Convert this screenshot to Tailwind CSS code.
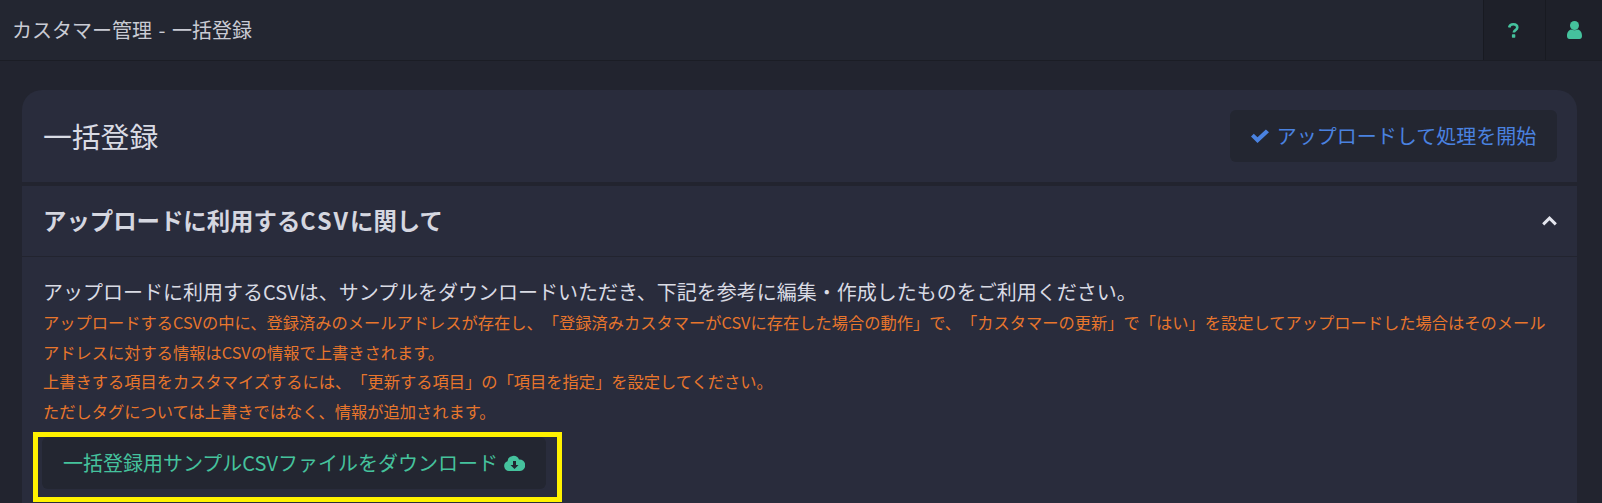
<!DOCTYPE html>
<html lang="ja">
<head>
<meta charset="utf-8">
<script src="https://cdn.jsdelivr.net/npm/@tailwindcss/browser@4"></script>
</head>
<body class="m-0 h-[503px] overflow-hidden bg-[#22242f] font-['Noto_Sans_CJK_JP','Noto_Sans',sans-serif] text-[#d5d7e0] [text-spacing-trim:space-all]">
  <header class="flex h-[61px] items-stretch justify-between border-b border-[#1b1d25] bg-[#232631]">
    <div class="flex items-center pl-[12px] text-[20px] text-[#c9cbd4] [word-spacing:2px]">カスタマー管理 - 一括登録</div>
    <div class="flex">
      <div class="flex w-[62px] items-center justify-center border-l border-[#181a21] bg-[#1e2029] pr-[2px]">
        <svg width="11" height="15" viewBox="0 0 11 15"><path d="M1.200 4.500C1.500 2.500 3 1.300 5.300 1.300c2.400 0 4 1.300 4 3.200 0 2.600-3.500 2.700-3.500 5" fill="none" stroke="#45c29d" stroke-width="2.600"/><rect x="3.900" y="11.300" width="3.400" height="3.400" rx=".6" fill="#45c29d"/></svg>
      </div>
      <div class="flex w-[57px] items-center justify-center border-l border-[#181a21] bg-[#1e2029]">
        <svg width="15" height="18" viewBox="0 0 15 18"><circle cx="7.500" cy="4.500" r="4.500" fill="#45c29d"/><path d="M0 15c0-4 2-6 4-6.500 2 1 5 1 7 0 2 .5 4 2.500 4 6.500 0 2-1 3-2.500 3h-10C1 18 0 17 0 15z" fill="#45c29d"/></svg>
      </div>
    </div>
  </header>
  <main class="relative pl-[22px] pr-[25px] pt-[29px]">
    <section class="rounded-t-[20px] bg-[#292c3c]">
      <div class="box-content flex h-[92px] items-center justify-between border-b-[4px] border-[#22242f] pl-[21px] pr-[20px]">
        <h1 class="text-[28.800px] font-normal text-[#d9dbe4]">一括登録</h1>
        <button class="flex h-[52px] w-[327px] items-center justify-center gap-[8px] rounded-[6px] bg-[#232631] text-[20px] text-[#4a82e0]">
          <svg width="18" height="14" viewBox="0 0 18 14"><path d="M0 7.500l2.800-2.800 3.700 3.600L14.900.5 18 3.300 6.500 14z" fill="#4a82e0"/></svg>
          アップロードして処理を開始
        </button>
      </div>
      <div class="flex h-[71px] items-center justify-between border-b border-[#22242f] pl-[21px] pr-[20px]">
        <h2 class="text-[23.400px] font-bold text-[#d5d7e0]">アップロードに利用する<span class="tracking-[2px]">CSV</span>に関して</h2>
        <svg width="15" height="10" viewBox="0 0 15 10"><path d="M1.200 8.300L7.500 2.200l6.300 6.100" fill="none" stroke="#e4e6ee" stroke-width="3"/></svg>
      </div>
      <div class="px-[21px] pt-[19px] pb-[20px]">
        <p class="text-[20px] leading-[32px] text-[#d9dbe4]">アップロードに利用するCSVは、サンプルをダウンロードいただき、下記を参考に編集・作成したものをご利用ください。</p>
        <p class="text-[16.250px] leading-[29.500px] text-[#e8762c]">アップロードするCSVの中に、登録済みのメールアドレスが存在し、「登録済みカスタマーがCSVに存在した場合の動作」で、「カスタマーの更新」で「はい」を設定してアップロードした場合はそのメールアドレスに対する情報はCSVの情報で上書きされます。<br>上書きする項目をカスタマイズするには、「更新する項目」の「項目を指定」を設定してください。<br>ただしタグについては上書きではなく、情報が追加されます。</p>
        <a class="mt-[11px] ml-[-1px] flex h-[52px] w-[504px] items-center justify-center gap-[6px] rounded-[6px] bg-[#232631] text-[20px] text-[#45c29d]">
          一括登録用サンプルCSVファイルをダウンロード
          <svg width="21" height="16" viewBox="0 0 21 16"><path fill-rule="evenodd" d="M5 16a5 5 0 0 1-1.500-9.700A6 6 0 0 1 15 4.500a5.500 5.500 0 0 1 1 11.500zM9 6v4H6.500l4 4 4-4H12V6z" fill="#45c29d"/></svg>
        </a>
      </div>
    </section>
    <div class="pointer-events-none absolute left-[33px] top-[371px] h-[70px] w-[529px] border-[5px] border-[#fff200]"></div>
  </main>
</body>
</html>
